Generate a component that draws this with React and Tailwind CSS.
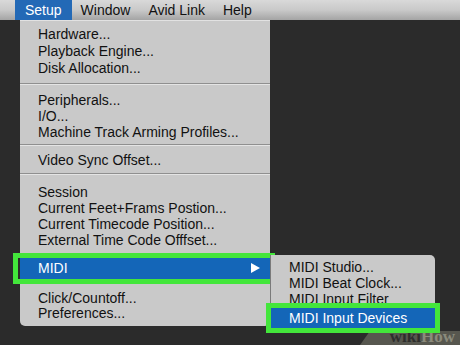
import React from 'react';

const font = { fontFamily: '"Liberation Sans", Arial, sans-serif' };

function Item({ children, h = 'h-[16px] leading-[16px]' }) {
  return <div className={`${h} pl-[18px] whitespace-nowrap`}>{children}</div>;
}

function Sep({ className }) {
  return (
    <div className={className}>
      <div className="h-px bg-[#8f8f8f]" />
      <div className="h-px bg-[#e4e4e4]" />
    </div>
  );
}

export default function App() {
  const topMenus = ['Window', 'Avid Link', 'Help'];

  return (
    <div className="relative w-[460px] h-[345px] overflow-hidden bg-[#2b2b2b] text-[14px] text-[#111]" style={font}>
      {/* watermark band */}
      <div
        className="absolute right-0 bottom-0 w-[100px] h-[14px] bg-[#57574f]"
        style={{ clipPath: 'polygon(10% 0, 100% 0, 100% 100%, 0 100%)' }}
      />
      <div
        className="absolute right-[5px] bottom-0 text-[17px] font-bold leading-[17px]"
        style={{ fontFamily: '"Liberation Serif", "Times New Roman", serif' }}
      >
        <span className="text-[#2e2e2c]">wiki</span>
        <span className="text-[#8b8b7c]">How</span>
      </div>

      {/* menu bar */}
      <div className="flex h-[20px] bg-gradient-to-b from-[#d9d9d9] via-[#c9c9c9] to-[#a4a4a4] leading-[20px]">
        <div className="ml-[15px] px-[10px] bg-[#2369b6] text-white">Setup</div>
        {topMenus.map(m => (
          <div key={m} className="px-[9px]">{m}</div>
        ))}
      </div>

      {/* Setup dropdown */}
      <div className="ml-[20px] w-[250px] bg-[#c9c9c9] rounded-b-[5px] pt-[5px] pb-[5px] border-t border-[#e2e2e2]">
        <Item h="h-[17px] leading-[17px]">Hardware...</Item>
        <Item h="h-[17px] leading-[17px]">Playback Engine...</Item>
        <Item h="h-[17px] leading-[17px]">Disk Allocation...</Item>
        <Sep className="mt-[6px] mb-[7px]" />
        <Item>Peripherals...</Item>
        <Item>I/O...</Item>
        <Item>Machine Track Arming Profiles...</Item>
        <Sep className="mt-[4px] mb-[6px]" />
        <Item>Video Sync Offset...</Item>
        <Sep className="mt-[5px] mb-[9px]" />
        <Item>Session</Item>
        <Item>Current Feet+Frams Postion...</Item>
        <Item>Current Timecode Position...</Item>
        <Item>External Time Code Offfset...</Item>

        {/* MIDI row */}
        <div className="relative mt-[9px] h-[22px] leading-[22px] bg-[#1466b8] text-white pl-[18px] flex justify-between pr-[10px]">
          <span>MIDI</span>
          <svg width="9" height="10" viewBox="0 0 9 10" className="mt-[6px]">
            <path d="M0 0 L9 5 L0 10 Z" fill="#fff" />
          </svg>
          <div className="absolute -left-[7px] -right-[5px] -top-[4px] -bottom-[5px] border-[5px] border-[#43e63b]" />
        </div>

        <Item h="mt-[12px] h-[15px] leading-[15px]">Click/Countoff...</Item>
        <Item h="h-[15px] leading-[15px]">Preferences...</Item>
      </div>

      {/* MIDI submenu */}
      <div className="absolute left-[270px] top-[255px] w-[165px] bg-[#c9c9c9] rounded-r-[5px] pt-[4px] pb-[4px] border-l border-[#7a7a7a]">
        <Item>MIDI Studio...</Item>
        <Item>MIDI Beat Clock...</Item>
        <Item>MIDI Input Filter</Item>
        <div className="relative mt-[1px] h-[20px] leading-[20px] bg-[#1466b8] text-white pl-[18px] whitespace-nowrap">
          MIDI Input Devices
          <div className="absolute -left-[5px] -right-[5px] -top-[5px] -bottom-[5px] border-[5px] border-[#43e63b]" />
        </div>
      </div>
    </div>
  );
}
